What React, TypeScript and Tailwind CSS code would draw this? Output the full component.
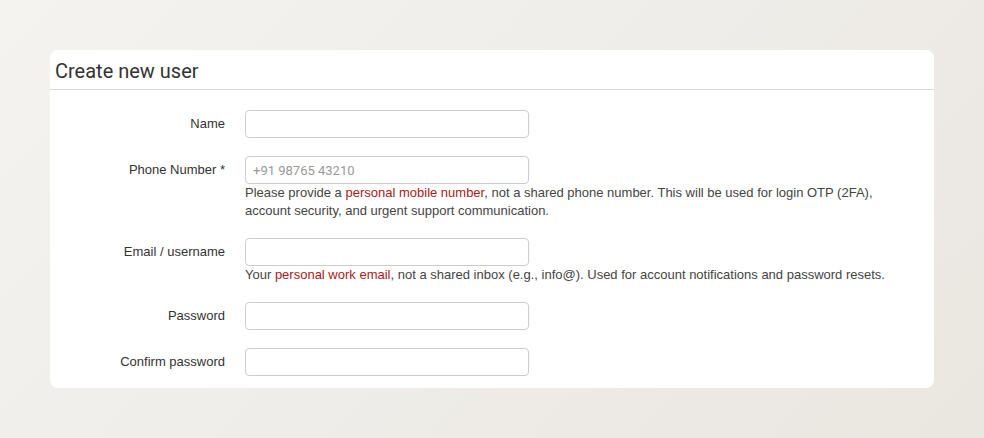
import React from "react";

function Row({
  label,
  placeholder,
  type = "text",
  help,
}: {
  label: string;
  placeholder?: string;
  type?: string;
  help?: React.ReactNode;
}) {
  return (
    <div className="flex mb-[18px] last:mb-0">
      <div className="w-[175px] shrink-0 h-[28px] flex items-center justify-end pr-0 text-[13px] text-[#333]">
        {label}
      </div>
      <div className="ml-[20px] flex-1 pr-[15px]">
        <input
          type={type}
          placeholder={placeholder}
          className="block w-[284px] h-[28px] rounded-[4px] border border-[#cccccc] bg-white px-[7px] text-[13px] text-[#333] placeholder:text-[#999] outline-none [font-family:Roboto,sans-serif]"
        />
        {help && (
          <div className="text-[13px] leading-[18px] text-[#444]">{help}</div>
        )}
      </div>
    </div>
  );
}

export default function App() {
  return (
    <div className="w-[984px] h-[438px] overflow-hidden bg-[linear-gradient(135deg,#f4f3f0_0%,#efede9_50%,#eae6e0_100%)] pt-[50px] pl-[50px] [font-family:'Liberation_Sans',Arial,sans-serif]">
      <div className="w-[884px] rounded-[8px] bg-white">
        <div className="h-[40px] border-b border-[#d9d9d9] pl-[5px] flex items-center pt-[2px]">
          <h1 className="text-[20px] text-[#333] [font-family:Roboto,sans-serif] font-normal">
            Create new user
          </h1>
        </div>
        <div className="pt-[20px] pb-[12px]">
          <Row label="Name" />
          <Row
            label="Phone Number *"
            placeholder="+91 98765 43210"
            type="tel"
            help={
              <>
                Please provide a{" "}
                <span className="text-[#a8201a]">personal mobile number</span>,
                not a shared phone number. This will be used for login OTP
                (2FA), account security, and urgent support communication.
              </>
            }
          />
          <Row
            label="Email / username"
            help={
              <>
                Your <span className="text-[#a8201a]">personal work email</span>
                , not a shared inbox (e.g., info@). Used for account
                notifications and password resets.
              </>
            }
          />
          <Row label="Password" type="password" />
          <Row label="Confirm password" type="password" />
        </div>
      </div>
    </div>
  );
}
